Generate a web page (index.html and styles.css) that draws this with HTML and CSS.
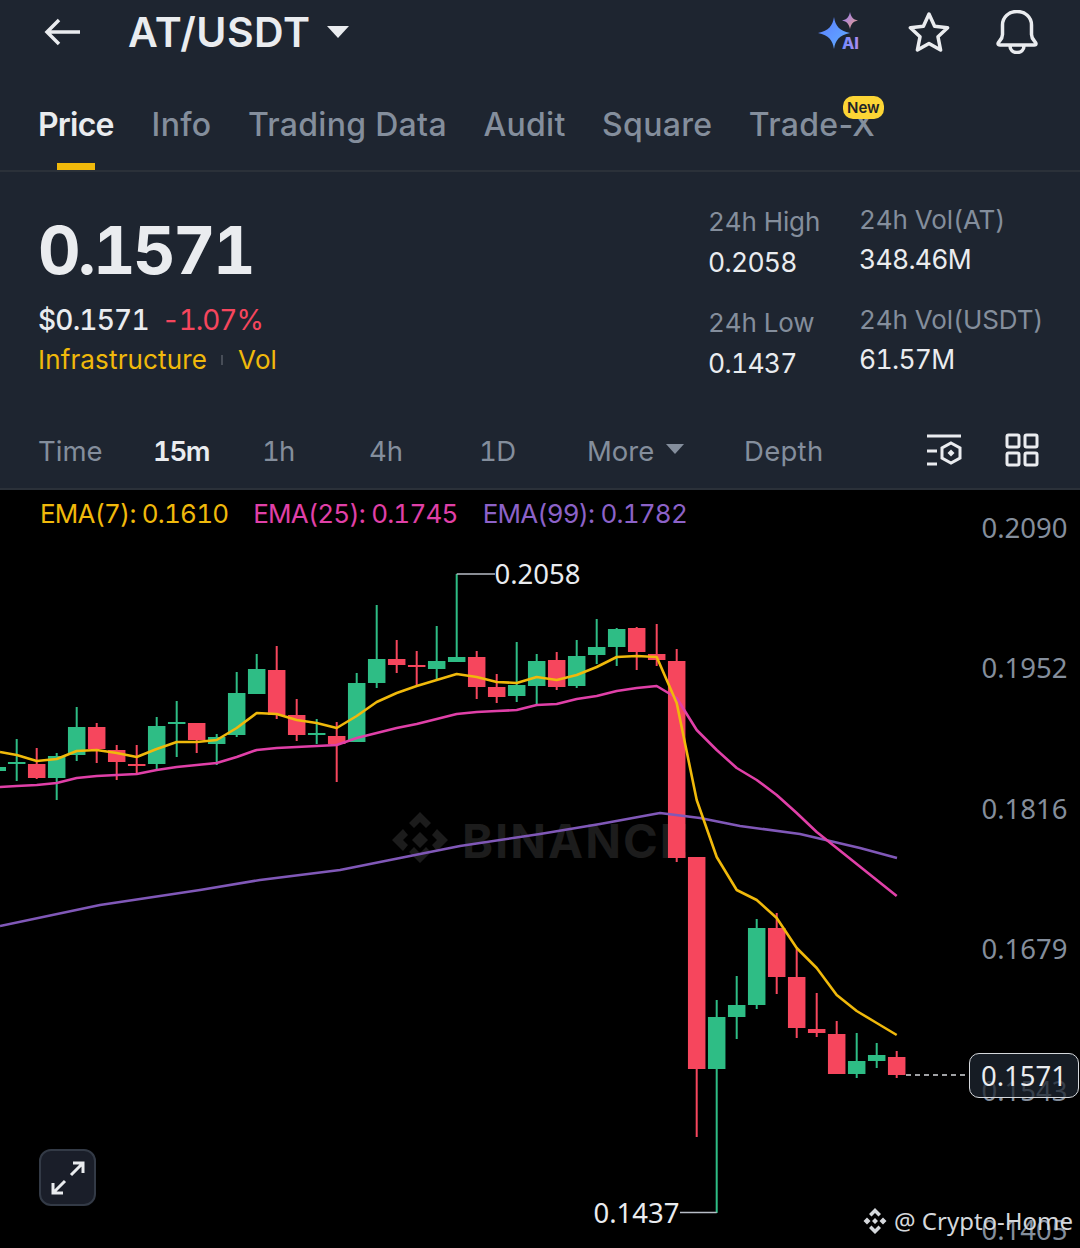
FILE: index.html
```html
<!DOCTYPE html>
<html lang="en">
<head>
    <meta charset="UTF-8">
    <meta name="viewport" content="width=device-width, initial-scale=1.0">
    <title>AT/USDT</title>
    <link rel="stylesheet" href="styles.css">
</head>
<body>
    <header class="panel">
        <div class="topbar">
            <svg class="back" viewBox="0 0 40 32" width="40" height="32"><path d="M37 16H4M16 4L4 16l12 12"/></svg>
            <div class="pair">AT/USDT</div>
            <div class="caret"></div>
            <div class="top-icons">
                <svg class="ai-icon" viewBox="0 0 46 42" width="46" height="42">
                    <defs>
                        <linearGradient id="aiblue" x1="0" y1="0" x2="1" y2="1">
                            <stop offset="0" stop-color="#5b7cff"/>
                            <stop offset="1" stop-color="#62b0ff"/>
                        </linearGradient>
                        <linearGradient id="aipink" x1="0" y1="0" x2="1" y2="1">
                            <stop offset="0" stop-color="#8f7cff"/>
                            <stop offset="1" stop-color="#f0a080"/>
                        </linearGradient>
                        <linearGradient id="aitext" x1="0" y1="0" x2="1" y2="0">
                            <stop offset="0" stop-color="#6f8cff"/>
                            <stop offset="1" stop-color="#b08cf0"/>
                        </linearGradient>
                    </defs>
                    <path fill="url(#aiblue)" d="M16 6C17.500 15 21 19.500 32 22 21 24.500 17.500 29 16 38 14.500 29 11 24.500 0 22 11 19.500 14.500 15 16 6Z"/>
                    <path fill="url(#aipink)" d="M32 1C33 6 35 8.500 40 9.500 35 10.500 33 13 32 18 31 13 29 10.500 24 9.500 29 8.500 31 6 32 1Z"/>
                    <text class="ai-text" x="24" y="38" fill="url(#aitext)">AI</text>
                </svg>
                <svg class="line-icon star" viewBox="0 0 42 42" width="42" height="42"><path d="M21 3l5.600 12.200 13 1.500-9.600 9.100 2.600 13.200L21 32.400 9.400 39l2.600-13.200-9.600-9.100 13-1.500z"/></svg>
                <svg class="line-icon" viewBox="0 0 44 44" width="44" height="44"><path d="M3 33.500c0-2 4.500-3.500 4.500-9V15C7.500 7 14 1.500 22 1.500S36.500 7 36.500 15v9.500c0 5.500 4.500 7 4.500 9 0 1-.7 1.500-2 1.500H5c-1.300 0-2-.5-2-1.500zM15 36c0 4 3 6.500 7 6.500s7-2.500 7-6.500"/></svg>
            </div>
        </div>

        <nav class="tabs">
            <div class="tab active">Price</div>
            <div class="tab">Info</div>
            <div class="tab">Trading Data</div>
            <div class="tab">Audit</div>
            <div class="tab">Square</div>
            <div class="tab">Trade-X<span class="new-badge">New</span></div>
        </nav>

        <section class="stats">
            <div class="price-col">
                <div class="last-price">0.1571</div>
                <div class="fiat-row"><span class="fiat">$0.1571</span><span class="change">-1.07%</span></div>
                <div class="tag-row"><span>Infrastructure</span><i class="tag-sep"></i><span>Vol</span></div>
            </div>
            <div class="stat-col col-hl">
                <div class="stat"><div class="stat-label">24h High</div><div class="stat-value">0.2058</div></div>
                <div class="stat"><div class="stat-label">24h Low</div><div class="stat-value">0.1437</div></div>
            </div>
            <div class="stat-col col-vol">
                <div class="stat"><div class="stat-label">24h Vol(AT)</div><div class="stat-value">348.46M</div></div>
                <div class="stat"><div class="stat-label">24h Vol(USDT)</div><div class="stat-value">61.57M</div></div>
            </div>
        </section>

        <div class="intervals">
            <span class="iv iv-time">Time</span>
            <span class="iv iv-15 active">15m</span>
            <span class="iv iv-1h">1h</span>
            <span class="iv iv-4h">4h</span>
            <span class="iv iv-1d">1D</span>
            <span class="iv iv-more">More<b class="more-caret"></b></span>
            <span class="iv iv-depth">Depth</span>
            <svg class="tool-icon settings" viewBox="0 0 36 34" width="36" height="34">
                <path d="M1 3h34M1 18h10M1 31h10"/>
                <path d="M25 10l9 5v10l-9 5-9-5V15z"/>
                <path class="dot" d="M25 16.500l3.500 3.500-3.500 3.500-3.500-3.500z"/>
            </svg>
            <svg class="tool-icon" viewBox="0 0 34 34" width="34" height="34">
                <rect x="2" y="2" width="12" height="12" rx="1.500"/>
                <rect x="20" y="2" width="12" height="12" rx="1.500"/>
                <rect x="2" y="20" width="12" height="12" rx="1.500"/>
                <rect x="20" y="20" width="12" height="12" rx="1.500"/>
            </svg>
        </div>
    </header>

    <main class="chart">
        <div class="legend">
            <span class="ema7">EMA(7): 0.1610</span>
            <span class="ema25">EMA(25): 0.1745</span>
            <span class="ema99">EMA(99): 0.1782</span>
        </div>

        <div class="wm-binance">
            <svg viewBox="0 0 60 60" width="60" height="60"><path d="M30 2l11 11-5 5-6-6-6 6-5-5zM13 19l5 6-5 5 5 5-5 6-11-11zM47 19l11 11-11 11-5-6 5-5-5-5zM30 22l8 8-8 8-8-8zM19 42l5-5 6 6 6-6 5 5-11 11z"/></svg>
            <span>BINANCE</span>
        </div>

        <svg id="candles" class="plot" width="1080" height="758" viewBox="0 490 1080 758"></svg>

        <div class="axis" style="top:23px">0.2090</div>
        <div class="axis" style="top:163px">0.1952</div>
        <div class="axis" style="top:304px">0.1816</div>
        <div class="axis" style="top:444px">0.1679</div>
        <div class="axis" style="top:586px">0.1543</div>
        <div class="axis" style="top:725px">0.1405</div>

        <div class="extreme high">0.2058</div>
        <div class="extreme low">0.1437</div>

        <div class="last-tag">0.1571</div>

        <div class="fullscreen">
            <svg viewBox="0 0 36 36" width="36" height="36"><path d="M21 15L33 3M23 3h10v10M15 21L3 33M13 33H3V23"/></svg>
        </div>

        <div class="credit">
            <svg viewBox="0 0 28 28" width="28" height="28"><path d="M14 1l6 6-2.500 2.500L14 6l-3.500 3.500L8 7zM6 10.500L9.500 14 6 17.500 2.500 14zM22 10.500l3.500 3.500-3.500 3.500-3.500-3.500zM14 11l3 3-3 3-3-3zM8 21l2.500-2.500L14 22l3.500-3.500L20 21l-6 6z"/></svg>
            <span>@ Crypto-Home</span>
        </div>
    </main>

    <script src="chart.js"></script>
</body>
</html>
```

FILE: styles.css
```css
:root {
    --panel: #1e2530;
    --muted: #848e9c;
    --text: #eaecef;
    --green: #2ebd85;
    --red: #f6465d;
    --yellow: #f0b90b;
}

* {
    margin: 0;
    padding: 0;
    box-sizing: border-box;
}

body {
    width: 1080px;
    height: 1248px;
    overflow: hidden;
    background: #000;
    font-family: 'Inter', 'Noto Sans', sans-serif;
    font-variant-numeric: tabular-nums;
    color: var(--text);
}

.panel {
    height: 490px;
    background: var(--panel);
    border-bottom: 2px solid #2b3139;
}

/* top bar */
.topbar {
    height: 64px;
    display: flex;
    align-items: center;
    padding-left: 43px;
}

.back path {
    fill: none;
    stroke: #eaecef;
    stroke-width: 3.5;
}

.pair {
    margin-left: 45px;
    font-size: 41px;
    font-weight: 600;
    letter-spacing: 0.5px;
}

.caret {
    margin-left: 16px;
    border-left: 11px solid transparent;
    border-right: 11px solid transparent;
    border-top: 12px solid var(--text);
}

.top-icons {
    margin-left: auto;
    margin-right: 41px;
    display: flex;
    align-items: center;
    gap: 45px;
}

.star {
    margin-left: -1px;
}

.ai-text {
    font-size: 16px;
    font-weight: 800;
}

.line-icon path {
    fill: none;
    stroke: #eaecef;
    stroke-width: 3.500;
    stroke-linejoin: round;
}

/* tabs */
.tabs {
    height: 108px;
    padding-left: 38px;
    display: flex;
    gap: 36.500px;
    border-bottom: 2px solid #2b3139;
    font-variant-numeric: normal;
}

.tab {
    position: relative;
    padding-top: 42px;
    font-size: 32px;
    font-weight: 500;
    letter-spacing: 0.3px;
    line-height: 38px;
    color: var(--muted);
}

.tab.active {
    margin-right: 1.500px;
    color: var(--text);
    font-weight: 600;
    letter-spacing: -0.8px;
}

.tab.active::after {
    content: '';
    position: absolute;
    left: 19px;
    bottom: 0;
    width: 38px;
    height: 7px;
    background: var(--yellow);
}

.new-badge {
    position: absolute;
    left: 94px;
    top: 32px;
    width: 41px;
    height: 23px;
    border-radius: 10px;
    background: #fcd535;
    color: #1e2329;
    font-size: 15px;
    font-weight: 600;
    line-height: 23px;
    text-align: center;
    letter-spacing: 0;
}

/* price stats */
.stats {
    display: flex;
    height: 238px;
    padding-left: 38px;
}

.price-col {
    width: 670px;
}

.last-price {
    margin-top: 38px;
    font-size: 66px;
    font-weight: 700;
    line-height: 80px;
    letter-spacing: -2.700px;
}

.fiat-row {
    margin-top: 13px;
    font-size: 28px;
    line-height: 34px;
    display: flex;
    gap: 15px;
    letter-spacing: -0.8px;
}

.fiat {
    font-weight: 500;
}

.change {
    margin-left: -2px;
    color: var(--red);
    letter-spacing: -1.100px;
}

.tag-row {
    margin-top: 6px;
    display: flex;
    align-items: center;
    font-size: 26px;
    line-height: 34px;
    letter-spacing: 0.15px;
    color: var(--yellow);
}

.tag-sep {
    width: 2px;
    height: 10px;
    margin: 0 15px 0 14px;
    background: #474d57;
}

.stat-col {
    display: flex;
    flex-direction: column;
    gap: 27px;
}

.col-hl {
    width: 151px;
    padding-top: 33px;
}

.col-vol {
    padding-top: 31px;
}

.col-vol .stat-value {
    margin-top: 5px;
}

.stat-label {
    font-size: 26px;
    line-height: 34px;
    letter-spacing: -0.1px;
    color: var(--muted);
}

.stat-value {
    margin-top: 6px;
    font-size: 26.500px;
    line-height: 34px;
    letter-spacing: -0.7px;
}

/* interval row */
.intervals {
    position: relative;
    height: 78px;
    font-size: 27.500px;
    color: var(--muted);
}

.iv {
    position: absolute;
    top: 23px;
    line-height: 36px;
}

.iv-time { left: 38px; }
.iv-15 { left: 153px; color: var(--text); font-weight: 600; letter-spacing: -1.400px; }
.iv-1h { left: 262px; letter-spacing: -0.8px; }
.iv-4h { left: 369px; }
.iv-1d { left: 479px; letter-spacing: -0.5px; }
.iv-more { left: 587px; }
.iv-depth { left: 744px; letter-spacing: 0.3px; }

.more-caret {
    display: inline-block;
    margin-left: 12px;
    vertical-align: 7px;
    border-left: 9px solid transparent;
    border-right: 9px solid transparent;
    border-top: 10px solid var(--muted);
}

.tool-icon {
    position: absolute;
    top: 23px;
    left: 1005px;
    fill: none;
    stroke: #eaecef;
    stroke-width: 3;
}

.tool-icon.settings {
    left: 926px;
}

.tool-icon .dot {
    fill: #eaecef;
    stroke: none;
}

/* chart */
.chart {
    position: relative;
    height: 758px;
    overflow: hidden;
}

.legend {
    display: flex;
    gap: 25px;
    padding: 7px 0 0 40px;
    font-size: 26px;
    line-height: 34px;
    letter-spacing: -0.8px;
}

.ema7 { color: #f0b90b; }
.ema25 { color: #e040a8; }
.ema99 { color: #8c62c8; }

.plot {
    position: absolute;
    left: 0;
    top: 0;
}

.axis {
    position: absolute;
    left: 981.500px;
    font-family: 'Noto Sans', sans-serif;
    font-size: 27.500px;
    line-height: 30px;
    color: #848e9c;
}

.extreme {
    position: absolute;
    font-family: 'Noto Sans', sans-serif;
    font-size: 27.500px;
    line-height: 30px;
    color: #eaecef;
}

.extreme.high { left: 494.500px; top: 69px; }
.extreme.low { left: 593.500px; top: 708px; }

.last-tag {
    position: absolute;
    left: 969px;
    top: 563px;
    width: 110px;
    height: 45px;
    border: 1px solid #d5d8dc;
    border-radius: 10px;
    background: rgba(30, 37, 48, 0.75);
    font-family: 'Noto Sans', sans-serif;
    font-size: 27.500px;
    line-height: 43px;
    text-align: center;
    color: #eaecef;
}

.fullscreen {
    position: absolute;
    left: 39px;
    top: 659px;
    width: 57px;
    height: 57px;
    border: 2px solid #333a46;
    border-radius: 12px;
    background: #1a1e29;
    display: flex;
    align-items: center;
    justify-content: center;
}

.fullscreen path {
    fill: none;
    stroke: #eaecef;
    stroke-width: 3;
}

.wm-binance {
    position: absolute;
    left: 390px;
    top: 320px;
    display: flex;
    align-items: center;
    gap: 12px;
    font-size: 47px;
    font-weight: 700;
    letter-spacing: 2px;
    color: #1c1c1c;
}

.wm-binance path {
    fill: #1c1c1c;
}

.credit {
    position: absolute;
    left: 861px;
    top: 716px;
    display: flex;
    align-items: center;
    gap: 5px;
    white-space: nowrap;
    font-family: 'Noto Sans', sans-serif;
    font-size: 24px;
    line-height: 30px;
    color: #d5d8dc;
}

.credit path {
    fill: #d5d8dc;
}
```

FILE: chart.js
```js
// x = center of candle, [wick top, wick bottom, body top, body bottom, color]
const START_X = 16.7;
const STEP = 20;
const BODY = 17.5;

const candles = [
    [739, 781, 762, 764, 'g'], [748, 779, 764, 778, 'r'], [753, 800, 756, 778, 'g'],
    [707, 761, 727, 755, 'g'], [723, 763, 727, 749, 'r'], [745, 780, 750, 762, 'r'],
    [745, 773, 764, 766, 'r'], [717, 769, 726, 764, 'g'], [701, 757, 722, 724, 'g'],
    [723, 753, 723, 740, 'r'], [734, 765, 737, 744, 'g'], [672, 737, 693, 735, 'g'],
    [654, 694, 669, 694, 'g'], [646, 719, 670, 715, 'r'], [699, 741, 715, 735, 'r'],
    [719, 744, 733, 735, 'g'], [722, 782, 736, 744, 'r'], [673, 742, 683, 742, 'g'],
    [605, 688, 659, 683, 'g'], [640, 673, 659, 665, 'r'], [651, 685, 665, 667, 'r'],
    [626, 680, 661, 669, 'g'], [574, 662, 657, 662, 'g'], [651, 699, 657, 687, 'r'],
    [674, 703, 687, 697, 'r'], [642, 702, 685, 696, 'g'], [654, 704, 661, 686, 'g'],
    [652, 690, 660, 687, 'r'], [640, 688, 656, 686, 'g'], [619, 664, 647, 655, 'g'],
    [628, 666, 629, 647, 'g'], [627, 670, 628, 652, 'r'], [624, 666, 654, 660, 'r'],
    [649, 862, 661, 858, 'r'], [857, 1137, 857, 1069, 'r'], [1000, 1213, 1017, 1069, 'g'],
    [976, 1039, 1005, 1017, 'g'], [919, 1009, 928, 1005, 'g'], [913, 994, 928, 977, 'r'],
    [949, 1038, 977, 1028, 'r'], [993, 1037, 1029, 1033, 'r'], [1021, 1074, 1034, 1074, 'r'],
    [1033, 1078, 1061, 1074, 'g'], [1043, 1068, 1055, 1061, 'g'], [1051, 1078, 1057, 1075, 'r']
];

const ema7 = [
    755, 761, 759, 751, 750, 753, 757, 749, 742, 742, 740, 728, 713, 714, 720, 723, 728,
    716, 702, 693, 686, 680, 674, 677, 682, 683, 677, 680, 675, 667, 657, 656, 657,
    703, 800, 857, 890, 900, 918, 948, 968, 995, 1011, 1023, 1035
];

const ema25 = [
    786, 785, 783, 778, 776, 775, 774, 770, 767, 765, 763, 757, 750, 748, 747, 746, 745,
    738, 733, 728, 724, 719, 714, 712, 711, 710, 705, 704, 699, 696, 691, 688, 686,
    698, 730, 750, 768, 780, 795, 813, 832, 848, 864, 880, 896
];

const ema99 = [
    [0, 926], [100, 905], [200, 890], [260, 880], [340, 870], [400, 858], [460, 846],
    [540, 834], [600, 824], [660, 813], [700, 818], [740, 826], [800, 834], [860, 848], [897, 858]
];

const colors = { g: '#2ebd85', r: '#f6465d' };
const svg = document.getElementById('candles');
let out = '';

// the candle cut off at the left edge
out += `<rect x="0" y="767" width="6" height="4" fill="${colors.g}"/>`;

candles.forEach((c, i) => {
    const x = START_X + i * STEP;
    const color = colors[c[4]];
    out += `<line x1="${x}" x2="${x}" y1="${c[0]}" y2="${c[1]}" stroke="${color}" stroke-width="2"/>`;
    out += `<rect x="${x - BODY / 2}" y="${c[2]}" width="${BODY}" height="${c[3] - c[2]}" fill="${color}"/>`;
});

function emaLine(values) {
    return values.map((y, i) => `${(START_X + i * STEP).toFixed(1)},${y}`).join(' ');
}

function line(points, color) {
    return `<polyline points="${points}" fill="none" stroke="${color}" stroke-width="2.600" stroke-linejoin="round"/>`;
}

out += line(ema99.map(p => p.join(',')).join(' '), '#8058b8');
out += line('0,787 ' + emaLine(ema25), '#e040a8');
out += line('0,752 ' + emaLine(ema7), '#f0b90b');

// callouts for the high and the low, dashed line to the last price
out += `<polyline points="456.7,574 495,574" fill="none" stroke="#b7bdc6" stroke-width="1.500"/>`;
out += `<polyline points="680,1212.500 716.700,1212.500" fill="none" stroke="#b7bdc6" stroke-width="1.500"/>`;
out += `<line x1="906" x2="969" y1="1075" y2="1075" stroke="#d5d8dc" stroke-width="1.500" stroke-dasharray="5 4"/>`;

svg.innerHTML = out;
```
